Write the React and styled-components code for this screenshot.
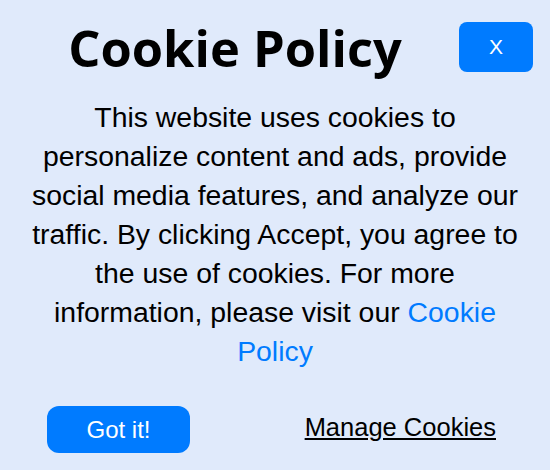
import styled, { createGlobalStyle } from "styled-components";

const GlobalStyle = createGlobalStyle`
  html, body {
    margin: 0;
    padding: 0;
    background: #e0eafb;
  }
`;

const Container = styled.div`
  width: 550px;
  height: 470px;
  box-sizing: border-box;
  background: #e0eafb;
  display: flex;
  flex-direction: column;
  font-family: "Liberation Sans", Arial, sans-serif;
  color: #000;
`;

const Header = styled.div`
  display: flex;
  align-items: flex-start;
  padding: 22px 17px 0 20px;
`;

const Title = styled.h1`
  flex: 1;
  margin: 0 9px 0 0;
  text-align: center;
  font-family: "Open Sans", sans-serif;
  font-weight: 700;
  font-size: 50.6px;
  line-height: 52px;
`;

const CloseButton = styled.button`
  width: 74px;
  height: 50px;
  border: none;
  border-radius: 8px;
  background: #007bff;
  color: #fff;
  font-family: "Liberation Sans", Arial, sans-serif;
  font-size: 21px;
  cursor: pointer;
`;

const Text = styled.p`
  margin: 24px 0 0;
  padding: 0 28px;
  text-align: center;
  font-size: 28.4px;
  line-height: 39px;
`;

const Link = styled.a`
  color: #007bff;
  text-decoration: none;
`;

const Actions = styled.div`
  display: flex;
  align-items: center;
  justify-content: space-between;
  padding: 0 54px 0 47px;
  margin-top: 35px;
`;

const AcceptButton = styled.button`
  width: 143px;
  height: 47px;
  border: none;
  border-radius: 12px;
  background: #007bff;
  color: #fff;
  font-family: "Liberation Sans", Arial, sans-serif;
  font-size: 24px;
  cursor: pointer;
`;

const ManageLink = styled.a`
  color: #000;
  font-size: 25.5px;
  margin-bottom: 4px;
  text-decoration: underline;
  cursor: pointer;
`;

const App = () => {
  return (
    <>
      <GlobalStyle />
      <Container>
        <Header>
          <Title>Cookie Policy</Title>
          <CloseButton>X</CloseButton>
        </Header>
        <Text>
          This website uses cookies to personalize content and ads, provide
          social media features, and analyze our traffic. By clicking Accept,
          you agree to the use of cookies. For more information, please visit
          our <Link href="#">Cookie Policy</Link>
        </Text>
        <Actions>
          <AcceptButton>Got it!</AcceptButton>
          <ManageLink>Manage Cookies</ManageLink>
        </Actions>
      </Container>
    </>
  );
};

export default App;
